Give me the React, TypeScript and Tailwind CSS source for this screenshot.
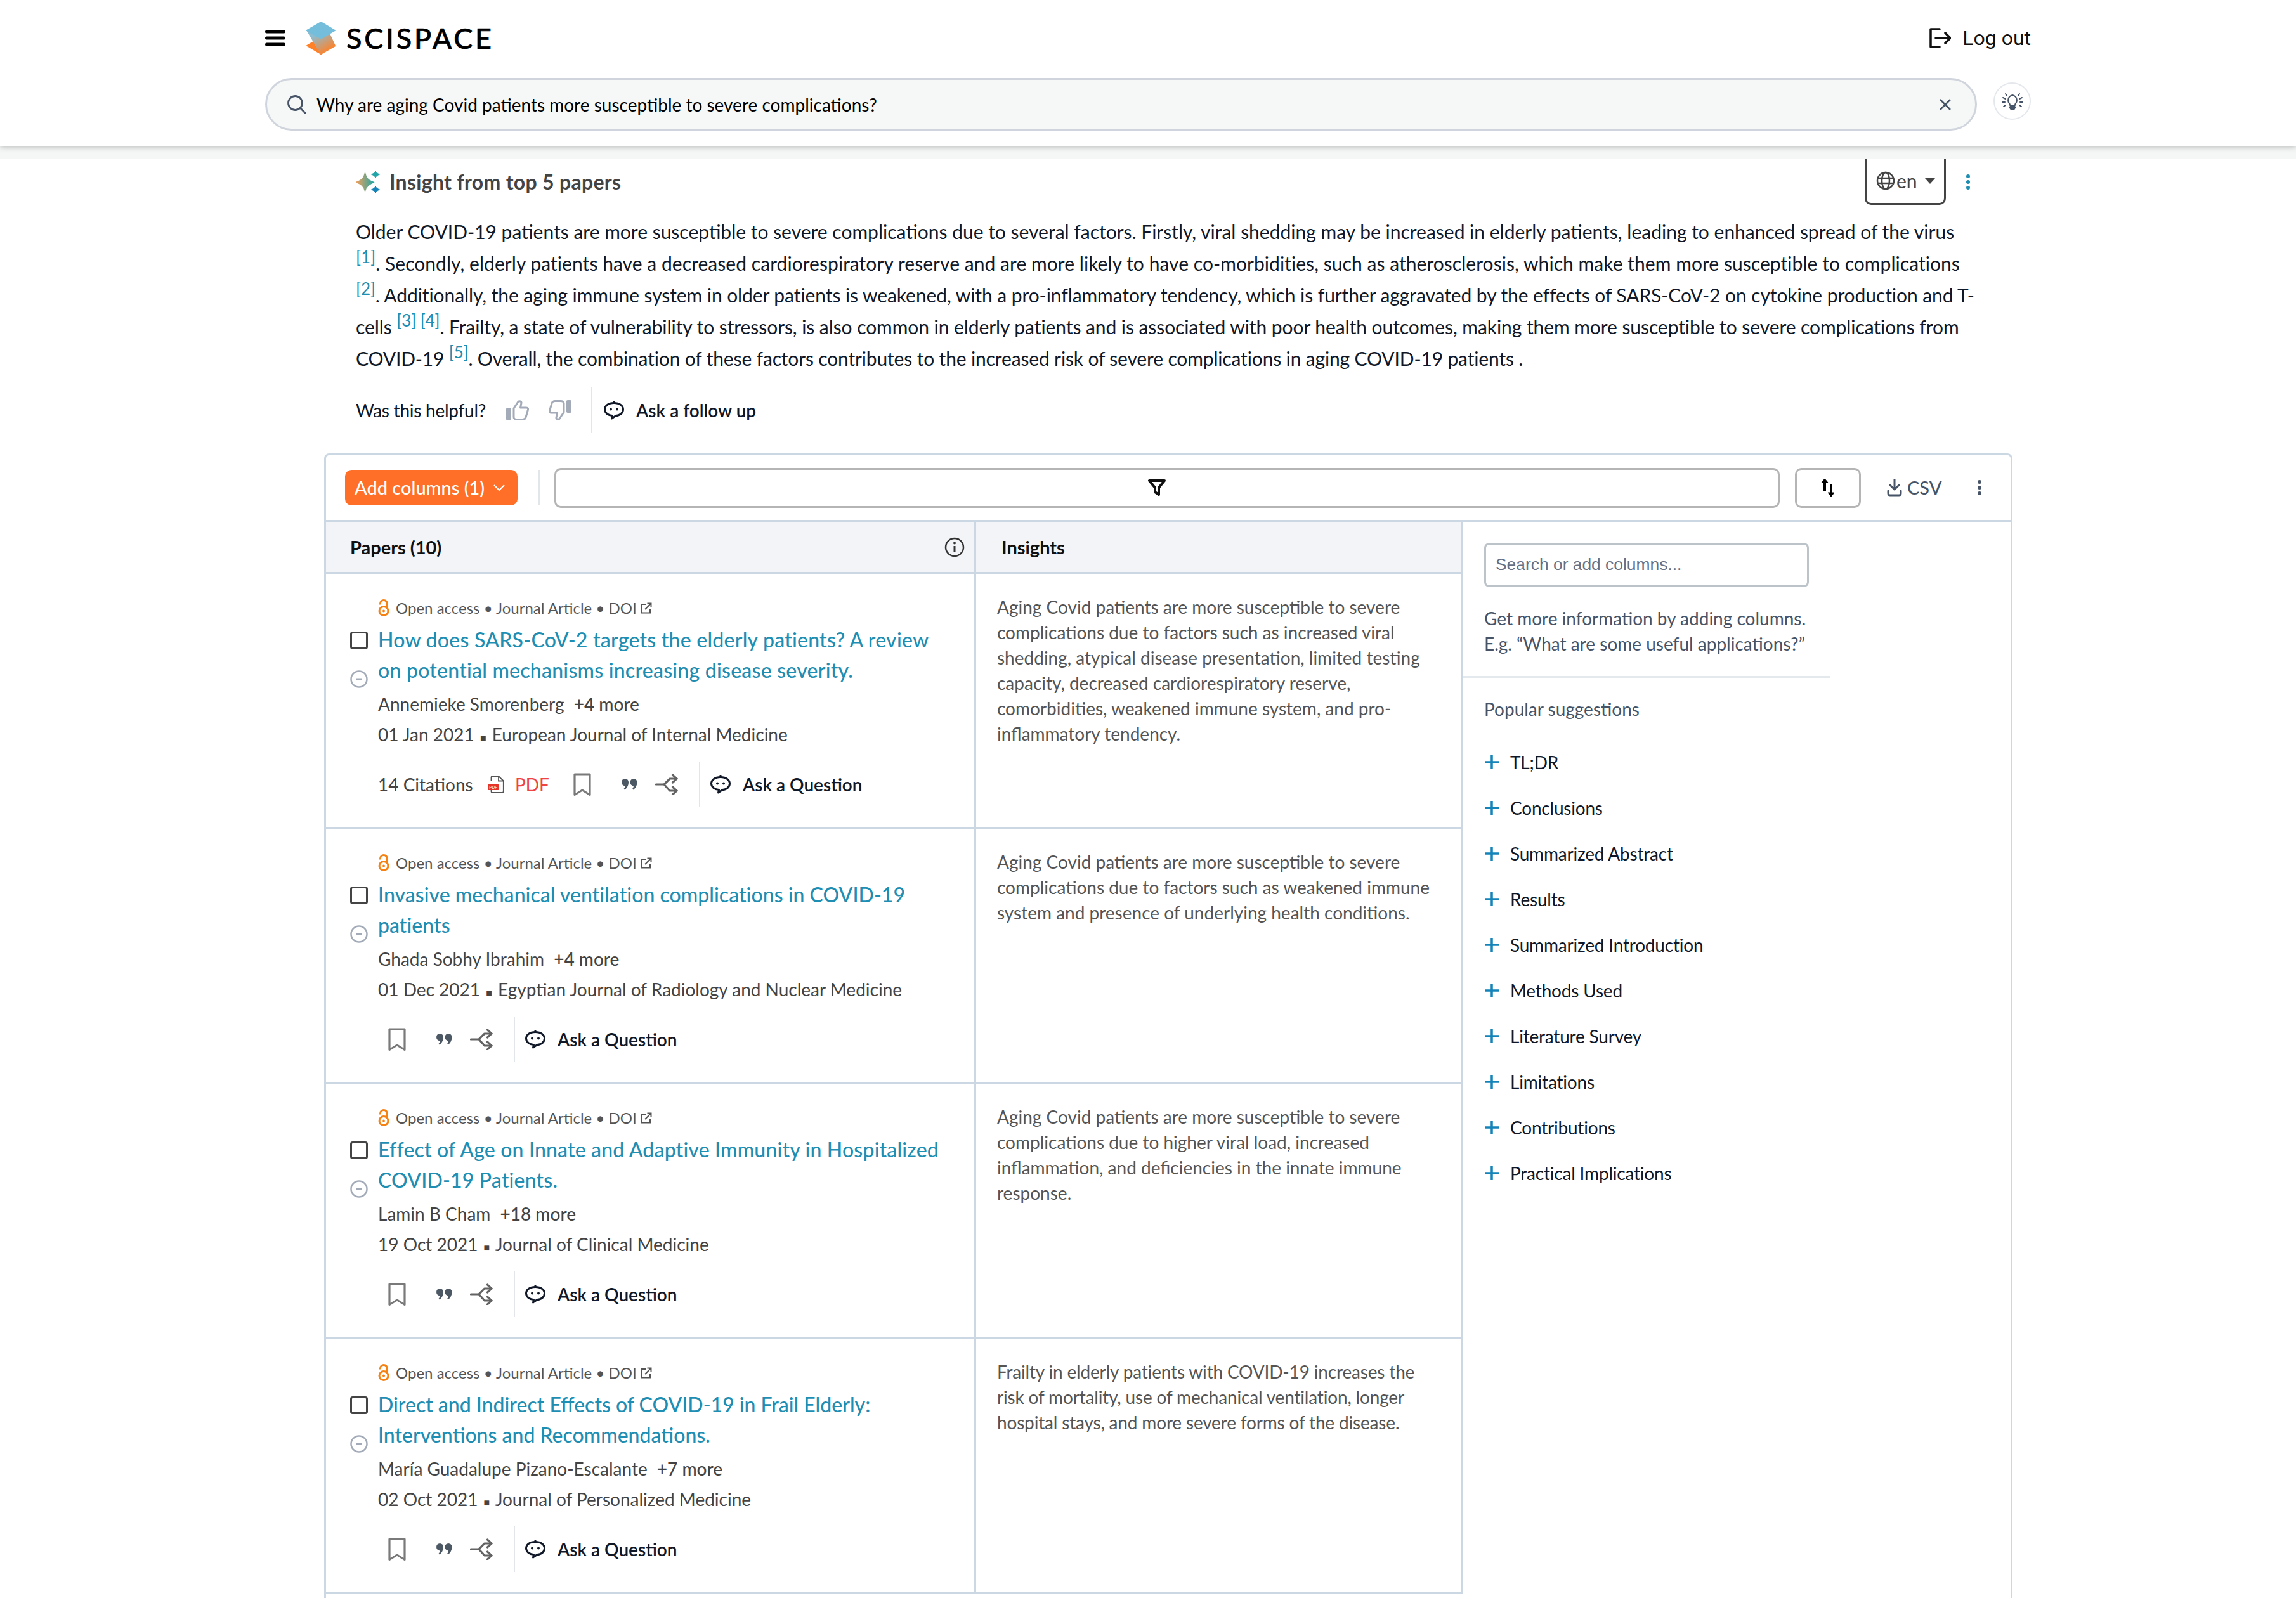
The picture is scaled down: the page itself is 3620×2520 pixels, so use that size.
import React from "react";

const F = "font-['Lato','Liberation_Sans',sans-serif]";

function Sparkle() {
  return (
    <svg width="38" height="36" viewBox="0 0 38 36" className="shrink-0">
      <defs>
        <linearGradient id="sg" x1="0" x2="1" y1="0" y2="0">
          <stop offset="0" stopColor="#f3a05c" />
          <stop offset="1" stopColor="#1fa7a4" />
        </linearGradient>
      </defs>
      <path d="M14.500 4 C16 11 19 15.500 28.500 18.500 C19 21.500 16 26 14.500 32 C13 26 10 21.500 0 18.500 C10 15.500 13 11 14.500 4Z" fill="url(#sg)" stroke="url(#sg)" strokeWidth="1.500" strokeLinejoin="round" />
      <path d="M31 0 C31.500 3 33.500 4.500 37.500 6 C33.500 7.500 31.500 9 31 12 C30.500 9 28.500 7.500 24.500 6 C28.500 4.500 30.500 3 31 0Z" fill="#22a5a8" stroke="#22a5a8" />
      <path d="M31 24 C31.500 27 33.500 28.500 37.500 30 C33.500 31.500 31.500 33 31 36 C30.500 33 28.500 31.500 24.500 30 C28.500 28.500 30.500 27 31 24Z" fill="#1483b8" stroke="#1483b8" />
    </svg>
  );
}

function ChatBot() {
  return (
    <svg width="32" height="30" viewBox="0 0 32 30" fill="none" stroke="#101828" strokeWidth="3" className="shrink-0">
      <path d="M16 3.500 C7 3.500 1.500 8 1.500 13.500 C1.500 19.500 7.500 23.500 13.500 23.500 L12.500 28 L19 23.500 C25 23.500 30.500 19.500 30.500 13.500 C30.500 8 25 3.500 16 3.500Z" strokeLinejoin="round" />
      <path d="M16 0V4" />
      <circle cx="11" cy="13.500" r="2" fill="#101828" stroke="none" />
      <circle cx="21" cy="13.500" r="2" fill="#101828" stroke="none" />
    </svg>
  );
}

function Bookmark() {
  return (
    <svg width="28" height="37" viewBox="0 0 28 37" fill="none" stroke="#7a7a7a" strokeWidth="3.200" className="shrink-0">
      <path d="M2 2H26V34.500L14 27L2 34.500Z" strokeLinejoin="round" />
    </svg>
  );
}

function Quotes() {
  return (
    <svg width="25" height="18" viewBox="0 0 25 18" fill="#4d5865" className="shrink-0">
      <path d="M0 5.500a5.500 5.500 0 0 1 11 0c0 5-2.500 9.500-6 12l-1.500-1.500c1-1.200 1.700-2.500 2-4.600C2 11 0 9 0 5.500Z" />
      <path d="M13.500 5.500a5.500 5.500 0 0 1 11 0c0 5-2.500 9.500-6 12l-1.500-1.500c1-1.200 1.700-2.500 2-4.600C15.500 11 13.500 9 13.500 5.500Z" />
    </svg>
  );
}

function Share() {
  return (
    <svg width="36" height="34" viewBox="0 0 36 34" fill="none" stroke="#636363" strokeWidth="3.200" strokeLinecap="round" strokeLinejoin="round" className="shrink-0">
      <path d="M1.500 17H14L23 8H34M14 17L23 27H34" />
      <path d="M27.500 2L34 8L27.500 14" />
      <path d="M27.500 21L34 27L27.500 33" />
    </svg>
  );
}

function Minus() {
  return (
    <svg width="28" height="28" viewBox="0 0 28 28" fill="none" stroke="#a3abb8" strokeWidth="2.500">
      <circle cx="14" cy="14" r="12.500" />
      <path d="M9 14H19" strokeWidth="3" />
    </svg>
  );
}

function OA() {
  return (
    <svg width="18" height="28" viewBox="0 0 18 28" fill="none" stroke="#f68212" strokeWidth="3" className="shrink-0">
      <circle cx="9" cy="18.500" r="7" />
      <circle cx="9" cy="18.500" r="2" fill="#f68212" stroke="none" />
      <path d="M3.500 8.500V7a5.500 5.500 0 0 1 11 0v7" />
    </svg>
  );
}

function Ext() {
  return (
    <svg width="18" height="18" viewBox="0 0 18 18" fill="none" stroke="#555" strokeWidth="2" className="shrink-0">
      <path d="M8 3H1.500V16.500H15V10" />
      <path d="M7 11L16.500 1.500M10.500 1.500H16.500V7.500" />
    </svg>
  );
}

function PdfIcon() {
  return (
    <svg width="26" height="28" viewBox="0 0 26 28" fill="none" className="shrink-0">
      <path d="M5.500 9V3Q5.500 1 7.500 1H17L24.800 8.500V25Q24.800 27 22.800 27H7.500Q5.500 27 5.500 25V23" stroke="#555" strokeWidth="1.800" strokeLinejoin="round" />
      <path d="M17 1V8.500H24.800" stroke="#555" strokeWidth="1.800" />
      <rect x="0" y="14" width="17.500" height="9" rx="1" fill="#e5352b" />
      <text x="8.700" y="21" textAnchor="middle" fontSize="6.500" fill="#fff" fontFamily="Liberation Sans">PDF</text>
    </svg>
  );
}

type Paper = {
  title: string[];
  tt: string;
  author: string;
  more: string;
  date: string;
  journal: string;
  citations?: string;
  pdf?: boolean;
  it: string;
  insight: string[];
};

const papers: Paper[] = [
  {
    title: ["How does SARS-CoV-2 targets the elderly patients? A review", "on potential mechanisms increasing disease severity."],
    tt: "tracking-[0.24px]",
    author: "Annemieke Smorenberg",
    more: "+4 more",
    date: "01 Jan 2021",
    journal: "European Journal of Internal Medicine",
    citations: "14 Citations",
    pdf: true,
    it: "",
    insight: [
      "Aging Covid patients are more susceptible to severe",
      "complications due to factors such as increased viral",
      "shedding, atypical disease presentation, limited testing",
      "capacity, decreased cardiorespiratory reserve,",
      "comorbidities, weakened immune system, and pro-",
      "inflammatory tendency.",
    ],
  },
  {
    title: ["Invasive mechanical ventilation complications in COVID-19", "patients"],
    tt: "tracking-[0.04px]",
    author: "Ghada Sobhy Ibrahim",
    more: "+4 more",
    date: "01 Dec 2021",
    journal: "Egyptian Journal of Radiology and Nuclear Medicine",
    it: "",
    insight: [
      "Aging Covid patients are more susceptible to severe",
      "complications due to factors such as weakened immune",
      "system and presence of underlying health conditions.",
    ],
  },
  {
    title: ["Effect of Age on Innate and Adaptive Immunity in Hospitalized", "COVID-19 Patients."],
    tt: "tracking-[0.18px]",
    author: "Lamin B Cham",
    more: "+18 more",
    date: "19 Oct 2021",
    journal: "Journal of Clinical Medicine",
    it: "",
    insight: [
      "Aging Covid patients are more susceptible to severe",
      "complications due to higher viral load, increased",
      "inflammation, and deficiencies in the innate immune",
      "response.",
    ],
  },
  {
    title: ["Direct and Indirect Effects of COVID-19 in Frail Elderly:", "Interventions and Recommendations."],
    tt: "",
    author: "María Guadalupe Pizano-Escalante",
    more: "+7 more",
    date: "02 Oct 2021",
    journal: "Journal of Personalized Medicine",
    it: "tracking-[-0.17px]",
    insight: [
      "Frailty in elderly patients with COVID-19 increases the",
      "risk of mortality, use of mechanical ventilation, longer",
      "hospital stays, and more severe forms of the disease.",
    ],
  },
];

const suggestions = [
  "TL;DR",
  "Conclusions",
  "Summarized Abstract",
  "Results",
  "Summarized Introduction",
  "Methods Used",
  "Literature Survey",
  "Limitations",
  "Contributions",
  "Practical Implications",
];

function Sup({ children }: { children: React.ReactNode }) {
  return <sup className="text-[#1f8eb3] text-[26px] top-[-12px]">{children}</sup>;
}

function Row({ p }: { p: Paper }) {
  return (
    <div className="flex h-[402px] border-b-[3px] border-[#cbd8e4]">
      <div className="w-[1025px] border-r-[3px] border-[#cbd8e4] pl-[38px] pr-[40px] pt-[40px] shrink-0">
        <div className="flex items-center h-[28px] pl-[44px] gap-[10px] text-[24px] text-[#555]">
          <OA />
          <span className="flex items-center gap-[6px] whitespace-nowrap">
            Open access • Journal Article • DOI <Ext />
          </span>
        </div>
        <div className="flex mt-[12px]">
          <div className="w-[44px] shrink-0 pt-[11px]">
            <div className="w-[28px] h-[28px] rounded-[4px] border-[3.5px] border-[#444]" />
            <div className="mt-[33px]">
              <Minus />
            </div>
          </div>
          <div>
            <div className={"text-[32px] leading-[48px] text-[#1f8eb3] font-medium " + p.tt}>
              {p.title.map((t) => (
                <div key={t} className="whitespace-nowrap">{t}</div>
              ))}
            </div>
            <div className="mt-[5px] text-[28px] leading-[48px] text-[#444] whitespace-nowrap">
              {p.author} <span className="ml-[8px] font-medium">{p.more}</span>
            </div>
            <div className="text-[28px] leading-[48px] text-[#444] whitespace-nowrap">
              {p.date} <span className="text-[16px] mx-[2px]">■</span> {p.journal}
            </div>
          </div>
        </div>
        <div className="flex items-center h-[72px] mt-[14px] pl-[44px]">
          {p.pdf && <span className="text-[28px] text-[#444] w-[173px]">{p.citations}</span>}
          {p.pdf && (
            <span className="flex items-center gap-[17px] w-[135px]">
              <PdfIcon />
              <span className="text-[28px] text-[#ef4444]">PDF</span>
            </span>
          )}
          <span className={p.pdf ? "" : "ml-[16px]"}><Bookmark /></span>
          <span className="ml-[48px]"><Quotes /></span>
          <span className="ml-[28px]"><Share /></span>
          <span className="h-[72px] w-[2px] bg-[#e2e5e9] ml-[33px]" />
          <span className="ml-[16px]"><ChatBot /></span>
          <span className="ml-[19px] text-[28px] font-semibold text-[#101828] whitespace-nowrap">Ask a Question</span>
        </div>
      </div>
      <div className={"w-[768px] border-r-[3px] border-[#cbd8e4] pl-[33px] pt-[32px] text-[28px] leading-[40px] text-[#555] shrink-0 " + p.it}>
        {p.insight.map((l) => (
          <div key={l} className="whitespace-nowrap">{l}</div>
        ))}
      </div>
    </div>
  );
}

export default function App() {
  return (
    <div className={"w-[3620px] h-[2520px] overflow-hidden bg-white text-[#101828] " + F}>
      <header className="h-[230px] bg-white shadow-[0_2px_8px_rgba(0,0,0,0.25)] px-[418px] relative z-10">
        <div className="flex items-center justify-between h-[120px] mb-[3px]">
          <div className="flex items-center">
            <svg width="32" height="26" viewBox="0 0 32 26" fill="none" stroke="#000" strokeWidth="5" strokeLinecap="round">
              <path d="M2.500 3H29.500M2.500 13H29.500M2.500 23H29.500" />
            </svg>
            <svg width="48" height="53" viewBox="0 0 48 53" className="ml-[32px]">
              <defs>
                <linearGradient id="lg" x1="0.15" x2="0.7" y1="0.25" y2="0.95">
                  <stop offset="0" stopColor="#8dbdd0" />
                  <stop offset="1" stopColor="#ff8128" />
                </linearGradient>
              </defs>
              <path d="M2 38L12 32L24 51Z" fill="#ff8128" stroke="#ff8128" strokeWidth="2" strokeLinejoin="round" />
              <path d="M3 15L24 51L46 38.500L37 19Z" fill="url(#lg)" stroke="url(#lg)" strokeWidth="2" strokeLinejoin="round" />
              <path d="M1.500 14L24 1L46 14L24 26.500Z" fill="#74bedb" stroke="#74bedb" strokeWidth="2" strokeLinejoin="round" />
            </svg>
            <span className="ml-[16px] text-[45px] font-medium tracking-[3.8px] text-black leading-none [-webkit-text-stroke:0.6px_black]">SCISPACE</span>
          </div>
          <div className="flex items-center">
            <svg width="34" height="32" viewBox="0 0 34 32" fill="none" stroke="#111" strokeWidth="3.500" strokeLinecap="round" strokeLinejoin="round">
              <path d="M16 2H2V30H16M10 16H32M25 8L33 16L25 24" />
            </svg>
            <span className="ml-[18px] text-[32px] text-[#111] font-['Roboto',sans-serif]">Log out</span>
          </div>
        </div>
        <div className="flex items-center">
          <div className="w-[2699px] h-[83px] rounded-full border-[3px] border-[#d0d5dd] bg-[#f6f8f7] flex items-center pl-[32px] pr-[37px]">
            <svg width="30" height="30" viewBox="0 0 30 30" fill="none" stroke="#475467" strokeWidth="2.800" strokeLinecap="round">
              <circle cx="12.500" cy="12.500" r="11" />
              <path d="M20.500 20.500L28.500 28.500" />
            </svg>
            <span className="ml-[16px] text-[28px] text-black flex-1">Why are aging Covid patients more susceptible to severe complications?</span>
            <svg width="20" height="20" viewBox="0 0 20 20" fill="none" stroke="#475467" strokeWidth="2.500">
              <path d="M2 2L18 18M18 2L2 18" />
            </svg>
          </div>
          <div className="ml-[26px] -mt-[10px] w-[59px] h-[59px] rounded-full border-[2px] border-[#e4e7ec] flex items-center justify-center">
            <svg width="32" height="28" viewBox="0 0 32 28" fill="none" stroke="#475467" strokeWidth="2" strokeLinecap="round">
              <path d="M11 17C8 14 8 6 16 4C24 6 24 14 21 17C20 18 20 20 19.500 21H12.500C12 20 12 18 11 17Z" />
              <path d="M12 24H20L18 27H14Z" fill="#475467" />
              <path d="M1 8L5 10M31 8L27 10M0 15H4M32 15H28M2 22L5 20M30 22L27 20M5 2L7 5M27 2L25 5" />
            </svg>
          </div>
        </div>
      </header>
      <div className="h-[20px] bg-[#f5f6f6]" />
      <main className="px-[561px]">
        <div className="flex items-center h-[73px] relative">
          <Sparkle />
          <span className="ml-[15px] text-[32px] font-bold tracking-[0.3px] text-[#444]">Insight from top 5 papers</span>
          <div className="absolute left-[2379px] top-0 w-[128px] h-[73px] rounded-b-[10px] border-[3px] border-t-0 border-[#444] flex items-center pl-[15px]">
            <svg width="30" height="30" viewBox="0 0 30 30" fill="none" stroke="#444" strokeWidth="2.500">
              <circle cx="15" cy="15" r="13" />
              <ellipse cx="15" cy="15" rx="6" ry="13" />
              <path d="M2 11H28M2 19H28" />
            </svg>
            <span className="ml-[2px] text-[30px] text-[#444]">en</span>
            <svg width="16" height="9" viewBox="0 0 16 9" fill="#444" className="ml-[12px]"><path d="M0 0H16L8 9Z" /></svg>
          </div>
          <div className="absolute left-[2539px] top-[25px] flex flex-col gap-[3px]">
            <span className="w-[6px] h-[6px] rounded-full bg-[#1f8eb3]" />
            <span className="w-[6px] h-[6px] rounded-full bg-[#1f8eb3]" />
            <span className="w-[6px] h-[6px] rounded-full bg-[#1f8eb3]" />
          </div>
        </div>
        <div className="mt-[17px] text-[30px] leading-[50px] text-[#101828] [&>div]:h-[50px] [&>div]:whitespace-nowrap">
          <div>Older COVID-19 patients are more susceptible to severe complications due to several factors. Firstly, viral shedding may be increased in elderly patients, leading to enhanced spread of the virus</div>
          <div className="tracking-[0.05px]"><Sup>[1]</Sup>. Secondly, elderly patients have a decreased cardiorespiratory reserve and are more likely to have co-morbidities, such as atherosclerosis, which make them more susceptible to complications</div>
          <div className="tracking-[-0.08px]"><Sup>[2]</Sup>. Additionally, the aging immune system in older patients is weakened, with a pro-inflammatory tendency, which is further aggravated by the effects of SARS-CoV-2 on cytokine production and T-</div>
          <div className="tracking-[-0.07px]">cells <Sup>[3] [4]</Sup>. Frailty, a state of vulnerability to stressors, is also common in elderly patients and is associated with poor health outcomes, making them more susceptible to severe complications from</div>
          <div className="tracking-[-0.15px]">COVID-19 <Sup>[5]</Sup>. Overall, the combination of these factors contributes to the increased risk of severe complications in aging COVID-19 patients .</div>
        </div>
        <div className="flex items-center h-[72px] mt-[21px]">
          <span className="text-[28px] tracking-[-0.25px] text-[#101828]">Was this helpful?</span>
          <svg width="36" height="32" viewBox="0 0 36 32" fill="none" stroke="#a3abb8" strokeWidth="3" className="ml-[32px]">
            <rect x="0" y="12" width="8" height="20" rx="2" fill="#a3abb8" stroke="none" />
            <path d="M12 13L19 2.500C21 1 24.500 2 24 4.500L22.500 12H32C34 12 35 13.500 34.500 15L31 27C30 30 28 30.500 26 30.500H17C14 30.500 12 29 12 27Z" strokeLinejoin="round" />
          </svg>
          <svg width="36" height="32" viewBox="0 0 36 32" fill="none" stroke="#a3abb8" strokeWidth="3" className="ml-[31px]">
            <g transform="rotate(180 18 16)">
              <rect x="0" y="12" width="8" height="20" rx="2" fill="#a3abb8" stroke="none" />
              <path d="M12 13L19 2.500C21 1 24.500 2 24 4.500L22.500 12H32C34 12 35 13.500 34.500 15L31 27C30 30 28 30.500 26 30.500H17C14 30.500 12 29 12 27Z" strokeLinejoin="round" />
            </g>
          </svg>
          <span className="h-[72px] w-[2px] bg-[#e2e5e9] ml-[31px]" />
          <span className="ml-[18px]"><ChatBot /></span>
          <span className="ml-[19px] text-[28px] font-semibold text-[#101828]">Ask a follow up</span>
        </div>
      </main>
      <section className="ml-[511px] mt-[32px] w-[2662px] border-[3px] border-[#cbd8e4] rounded-t-[8px] h-[2000px]">
        <div className="flex items-center h-[105px] border-b-[3px] border-[#cbd8e4] pl-[30px]">
          <div className="w-[272px] h-[56px] rounded-[10px] bg-[#ff6f27] text-white text-[29px] font-medium flex items-center pl-[15px] whitespace-nowrap">
            Add columns (1)
            <svg width="18" height="11" viewBox="0 0 18 11" fill="none" stroke="#fff" strokeWidth="2" className="ml-[14px]"><path d="M1 1L9 9L17 1" /></svg>
          </div>
          <span className="h-[56px] w-[2px] bg-[#e2e5e9] ml-[33px]" />
          <div className="ml-[23px] w-[1932px] h-[63px] rounded-[10px] border-[3px] border-[#b5b5b5] flex items-center justify-center pr-[32px]">
            <svg width="28" height="28" viewBox="0 0 28 28" fill="none" stroke="#111" strokeWidth="4" strokeLinejoin="round"><path d="M2 3H26L17 14V25L11 21V14Z" /></svg>
          </div>
          <div className="ml-[24px] w-[104px] h-[63px] rounded-[10px] border-[3px] border-[#b5b5b5] flex items-center justify-center">
            <svg width="22" height="30" viewBox="0 0 22 30" fill="#000" stroke="#000" strokeWidth="1"><path d="M6 1L11 7H7.500V20H4.500V7H1Z" /><path d="M16 29L11 23H14.500V10H17.500V23H21Z" /></svg>
          </div>
          <svg width="24" height="28" viewBox="0 0 24 28" fill="none" stroke="#475467" strokeWidth="3" strokeLinecap="round" strokeLinejoin="round" className="ml-[41px]">
            <path d="M12 1V17M5 10L12 17L19 10" />
            <path d="M2 19V23C2 25 3 26 5 26H19C21 26 22 25 22 23V19" />
          </svg>
          <span className="ml-[8px] text-[29px] font-medium text-[#475467]">CSV</span>
          <div className="ml-[57px] flex flex-col gap-[3px]">
            <span className="w-[6px] h-[6px] rounded-full bg-[#475467]" />
            <span className="w-[6px] h-[6px] rounded-full bg-[#475467]" />
            <span className="w-[6px] h-[6px] rounded-full bg-[#475467]" />
          </div>
        </div>
        <div className="flex">
          <div className="w-[1793px] shrink-0">
            <div className="flex h-[82px] border-b-[3px] border-[#cbd8e4] bg-[#f2f4f7]">
              <div className="w-[1025px] shrink-0 border-r-[3px] border-[#cbd8e4] pl-[38px] pr-[15px] flex items-center justify-between">
                <span className="text-[29px] font-bold text-[#101010]">Papers (10)</span>
                <svg width="32" height="32" viewBox="0 0 32 32" fill="none" stroke="#333" strokeWidth="2.500">
                  <circle cx="16" cy="16" r="14" />
                  <path d="M16 14V23" strokeWidth="3" />
                  <circle cx="16" cy="9.500" r="2" fill="#333" stroke="none" />
                </svg>
              </div>
              <div className="w-[768px] shrink-0 border-r-[3px] border-[#cbd8e4] pl-[40px] flex items-center">
                <span className="text-[29px] font-bold text-[#101010]">Insights</span>
              </div>
            </div>
            {papers.map((p) => (
              <Row key={p.title[0]} p={p} />
            ))}
          </div>
          <aside className="flex-1">
            <div className="w-[578px]">
              <div className="px-[33px] pt-[33px] pb-[31px] border-b-[3px] border-[#e4e9ee]">
                <div className="w-[512px] h-[70px] rounded-[8px] border-[3px] border-[#bcc3c9] flex items-center pl-[15px] text-[26.4px] text-[#667085] font-['Liberation_Sans',sans-serif]">
                  Search or add columns...
                </div>
                <div className="mt-[29px] text-[28px] leading-[40px] text-[#475467] whitespace-nowrap">
                  <div>Get more information by adding columns.</div>
                  <div>E.g. “What are some useful applications?”</div>
                </div>
              </div>
              <div className="pl-[33px] pt-[31px]">
                <div className="text-[28px] leading-[36px] text-[#475467]">Popular suggestions</div>
                <div className="mt-[30px]">
                  {suggestions.map((s) => (
                    <div key={s} className="flex items-center h-[72px] text-[28px] tracking-[-0.2px] text-[#101828]">
                      <svg width="24" height="24" viewBox="0 0 24 24" fill="none" stroke="#1483b8" strokeWidth="3.500" className="shrink-0"><path d="M12 1V23M1 12H23" /></svg>
                      <span className="ml-[17px]">{s}</span>
                    </div>
                  ))}
                </div>
              </div>
            </div>
          </aside>
        </div>
      </section>
    </div>
  );
}
